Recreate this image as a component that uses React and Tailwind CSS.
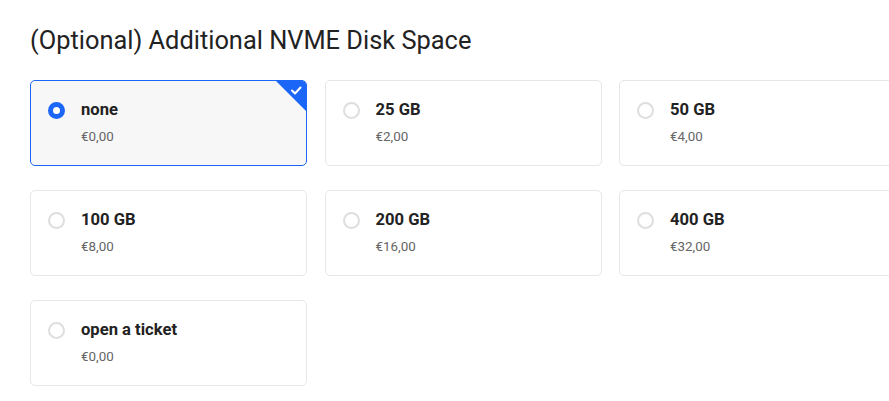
import React from "react";

const options = [
  { label: "none", price: "€0,00", selected: true },
  { label: "25 GB", price: "€2,00" },
  { label: "50 GB", price: "€4,00" },
  { label: "100 GB", price: "€8,00" },
  { label: "200 GB", price: "€16,00" },
  { label: "400 GB", price: "€32,00" },
  { label: "open a ticket", price: "€0,00" },
];

function Card({ label, price, selected }) {
  return (
    <div
      className={
        "relative h-[86px] rounded-[5px] border overflow-hidden flex flex-col justify-center pl-[50px] " +
        (selected ? "border-[#1b66f7] bg-[#f7f7f7]" : "border-[#e6e6e6] bg-white")
      }
    >
      <div className="flex items-center h-[20px] -mt-[2px]">
        <span
          className={
            "absolute left-[17px] w-[17px] h-[17px] rounded-full box-border " +
            (selected ? "border-[5px] border-[#1b66f7] bg-white" : "border-2 border-[#dedede] bg-white")
          }
        />
        <span className="text-[16.6px] font-bold text-[#222] leading-none">{label}</span>
      </div>
      <div className="mt-[10px] text-[13.4px] text-[#666] leading-none">{price}</div>
      {selected && (
        <div className="absolute top-0 right-0 w-[30px] h-[30px]">
          <svg width="30" height="30" viewBox="0 0 30 30" className="block">
            <polygon points="0,0 30,0 30,30" fill="#1b66f7" />
            <path d="M16 9.5 L19 12.5 L24.5 6.5" stroke="white" strokeWidth="2" fill="none" strokeLinecap="round" strokeLinejoin="round" />
          </svg>
        </div>
      )}
    </div>
  );
}

export default function App() {
  return (
    <div className="w-[889px] h-[401px] overflow-hidden bg-white" style={{ fontFamily: "Roboto, 'Liberation Sans', sans-serif" }}>
      <div className="pl-[30px] pt-[24px]">
        <h1 className="text-[25.4px] font-normal text-[#222] leading-[32px]">
          (Optional) Additional NVME Disk Space
        </h1>
        <div className="mt-[24px] grid grid-cols-[repeat(3,277px)] gap-x-[17.5px] gap-y-[24px]">
          {options.map((o) => (
            <Card key={o.label} {...o} />
          ))}
        </div>
      </div>
    </div>
  );
}
